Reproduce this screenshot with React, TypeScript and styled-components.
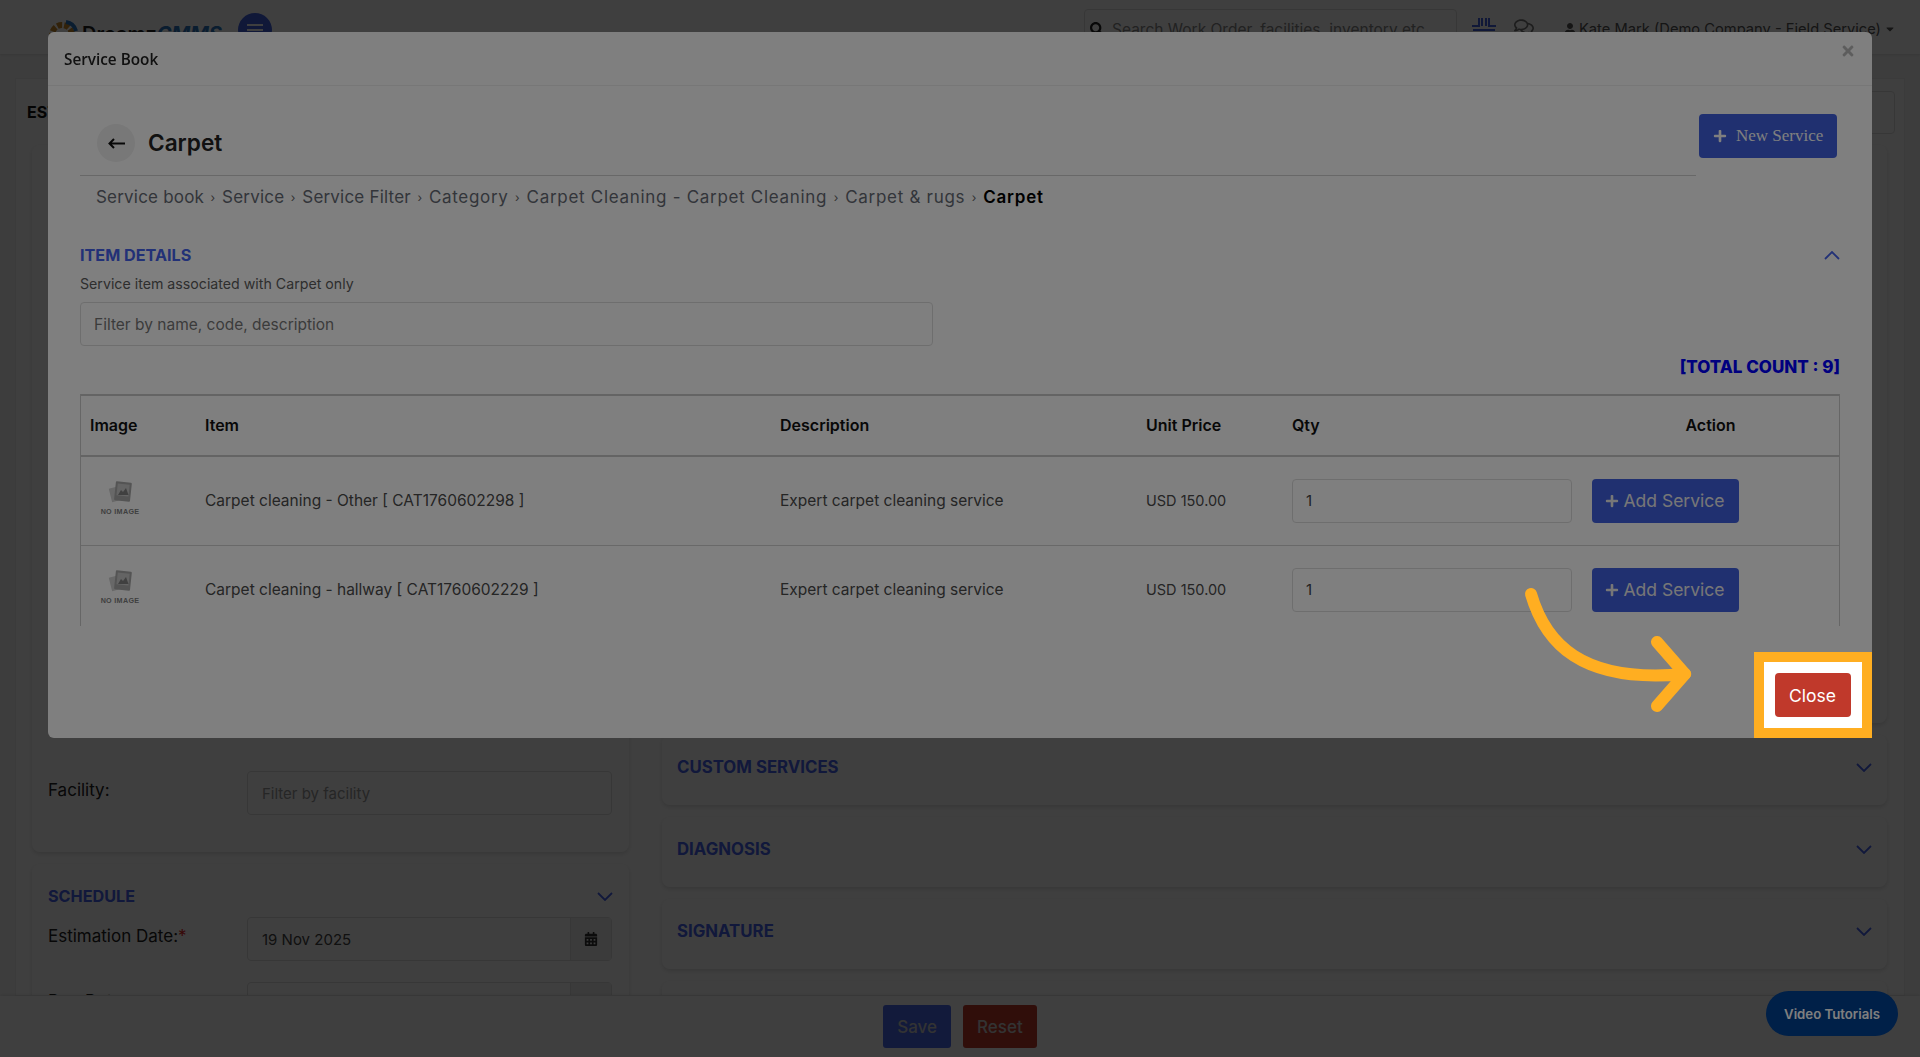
import { Fragment } from 'react';
import styled, { createGlobalStyle } from 'styled-components';
import { FaPlus, FaSearch, FaTimes, FaUser, FaRegComments, FaCalendarAlt, FaCaretDown } from 'react-icons/fa';

const BLUE = '#4060e0';
const HEADING = '#4562ee';

const GlobalStyle = createGlobalStyle`
  html, body {
    margin: 0;
    height: 100%;
    overflow: hidden;
  }
  body {
    font-family: Inter, 'Liberation Sans', sans-serif;
    color: #222;
    background: #f7f7f7;
  }
  * {
    box-sizing: border-box;
  }
`;

/* page behind the modal */
const Page = styled.div`
  height: 100vh;
  display: flex;
  flex-direction: column;
  overflow: hidden;
`;

const Navbar = styled.header`
  flex: 0 0 54px;
  display: flex;
  align-items: flex-start;
  padding: 9px 0 0 48px;
  background: #fff;
  box-shadow: 0 1px 3px rgba(0, 0, 0, 0.12);
`;

const Logo = styled.div`
  flex: 0 0 190px;
  display: flex;
  align-items: center;
  padding-top: 8px;
  font-size: 20px;
  font-weight: 600;
  color: #222;

  b {
    color: #2a74c0;
    font-style: italic;
    font-weight: 700;
  }
`;

const MenuButton = styled.div`
  flex: 0 0 34px;
  height: 34px;
  margin-top: 4px;
  border-radius: 50%;
  background: ${BLUE};
  display: flex;
  flex-direction: column;
  justify-content: center;
  align-items: center;
  gap: 3px;

  i {
    width: 16px;
    height: 2px;
    background: #fff;
  }
`;

const NavSearch = styled.div`
  flex: 0 0 373px;
  height: 40px;
  margin-left: 812px;
  padding: 0 5px 0 5px;
  display: flex;
  align-items: center;
  gap: 8px;
  border: 1px solid #ddd;
  border-radius: 4px;
  font-size: 15.5px;
  color: #888;
  white-space: nowrap;
`;

const NavIcons = styled.div`
  flex: none;
  display: flex;
  align-items: flex-start;
  gap: 17px;
  margin-left: 14px;
  padding-top: 8px;
  color: #777;
`;

const NavUser = styled.div`
  flex: none;
  display: flex;
  align-items: center;
  gap: 3px;
  margin-left: 30px;
  padding-top: 11px;
  font-size: 14.7px;
  color: #555;
  white-space: nowrap;
`;

const Main = styled.main`
  flex: 1;
  min-height: 0;
  margin: 24px 15px 0;
  padding: 0 11px;
  border: 1px solid #eee;
  background: #fff;
  overflow: hidden;
`;

const TitleRow = styled.div`
  height: 66px;
  display: flex;
  justify-content: space-between;
  align-items: center;
  font-size: 16px;
  font-weight: 700;
  color: #111;
`;

const OutlineBox = styled.div`
  width: 120px;
  height: 43px;
  margin-right: -2px;
  border: 1px solid #ddd;
  border-radius: 4px;
`;

const Columns = styled.div`
  display: grid;
  grid-template-columns: 597px 1225px;
  column-gap: 33px;
  margin-left: 5px;
`;

const Column = styled.div`
  display: flex;
  flex-direction: column;
  gap: 12px;
`;

const Card = styled.section<{ $h?: number }>`
  height: ${(p) => (p.$h ? `${p.$h}px` : 'auto')};
  padding: 20px 15px;
  background: #fff;
  border-radius: 8px;
  box-shadow: 0 2px 5px rgba(0, 0, 0, 0.14);
  overflow: hidden;
`;

const FacilityCard = styled(Card)`
  display: flex;
  flex-direction: column;
  justify-content: flex-end;
  padding: 20px 16px 16px;
`;

const ScheduleCard = styled(Card)`
  padding: 20px 16px;
`;

const AccordionHead = styled.div`
  display: flex;
  align-items: center;
  justify-content: space-between;
  height: 24px;
  font-size: 16.2px;
  font-weight: 700;
  color: ${HEADING};
`;

const ServiceHead = styled(AccordionHead)`
  font-size: 16.8px;
`;

const FieldRow = styled.div<{ $first?: boolean }>`
  display: grid;
  grid-template-columns: 199px 365px;
  align-items: start;
  font-size: 17px;
  margin-top: ${(p) => (p.$first ? '9px' : '0')};
  margin-bottom: 21px;

  label {
    padding-top: 9px;
  }
  em {
    color: #e02020;
    font-style: normal;
  }
`;

const BackField = styled.div`
  height: 44px;
  display: flex;
  align-items: center;
  justify-content: space-between;
  padding-left: 14px;
  border: 1px solid #ddd;
  border-radius: 4px;
  font-size: 15px;
  color: ${(p) => p.color || '#444'};
`;

const Addon = styled.div`
  width: 41px;
  height: 100%;
  display: flex;
  align-items: center;
  justify-content: center;
  background: #eee;
  border-left: 1px solid #ddd;
  color: #333;
`;

const BottomBar = styled.footer`
  flex: 0 0 61px;
  padding-top: 9px;
  display: flex;
  justify-content: center;
  gap: 12px;
  background: #fff;
  box-shadow: 0 -1px 3px rgba(0, 0, 0, 0.1);
`;

const BarButton = styled.button<{ $red?: boolean }>`
  height: 43px;
  padding: 0 14px;
  border: 0;
  border-radius: 3px;
  font: 500 17px Inter, sans-serif;
  color: #ccc;
  background: ${(p) => (p.$red ? '#c0392b' : '#4a68ec')};
`;

const VideoPill = styled.div`
  position: fixed;
  left: 1766px;
  top: 991px;
  width: 132px;
  height: 45px;
  z-index: 15;
  border-radius: 23px;
  display: flex;
  align-items: center;
  justify-content: center;
  background: #004090;
  color: #fff;
  font-size: 13.2px;
  font-weight: 600;
`;

/* layers */
const Backdrop = styled.div`
  position: fixed;
  inset: 0;
  z-index: 10;
  background: rgba(0, 0, 0, 0.5);
`;

const Dim = styled.div`
  position: fixed;
  inset: 0;
  z-index: 30;
  background: rgba(0, 0, 0, 0.5);
  backdrop-filter: blur(0.5px);
`;

/* modal */
const Modal = styled.div`
  position: fixed;
  left: 48px;
  top: 32px;
  width: 1824px;
  height: 706px;
  z-index: 20;
  display: flex;
  flex-direction: column;
  background: #fff;
  border-radius: 6px;
`;

const ModalHeader = styled.div`
  position: relative;
  flex: 0 0 54px;
  display: flex;
  align-items: center;
  padding: 0 16px;
  border-bottom: 1px solid #eee;
  font: 600 15.3px 'Open Sans', sans-serif;
  color: #222;
`;

const ModalClose = styled.span`
  position: absolute;
  top: 11px;
  right: 16px;
  display: flex;
  font-size: 16px;
  color: #bbb;
`;

const ModalBody = styled.div`
  padding: 28px 32px 0;
`;

const TopRow = styled.div`
  display: flex;
  align-items: flex-start;
  gap: 3px;
  padding-right: 3px;
`;

const TitleBlock = styled.div`
  flex: 1;
  height: 62px;
  padding: 10px 0 0 17px;
  display: flex;
  align-items: flex-start;
  gap: 13px;
  border-bottom: 1px solid #d0d0d0;
`;

const BackButton = styled.div`
  width: 38px;
  height: 38px;
  border-radius: 50%;
  display: flex;
  align-items: center;
  justify-content: center;
  background: #f0f0f0;
  color: #111;
`;

const PageTitle = styled.h1`
  margin: 0;
  font-size: 22.6px;
  line-height: 37px;
  font-weight: 600;
  color: #222;
`;

const NewServiceButton = styled.button`
  width: 138px;
  height: 44px;
  padding: 0 0 0 14px;
  display: flex;
  align-items: center;
  gap: 9px;
  border: 0;
  border-radius: 4px;
  background: ${BLUE};
  color: #fff;
  font: 400 17px 'Liberation Serif', serif;
`;

const Crumbs = styled.nav`
  display: flex;
  align-items: center;
  gap: 6.5px;
  height: 24px;
  margin: 9px 0 0 16px;
  font-size: 17px;
  color: #666b75;
`;

const Crumb = styled.span<{ $wide?: boolean }>`
  letter-spacing: ${(p) => (p.$wide ? '0.7px' : '0.2px')};
`;

const CrumbSep = styled.span`
  width: 5px;
  font-size: 12px;
  color: #666;
`;

const CurrentCrumb = styled.span`
  font-weight: 600;
  letter-spacing: 0.8px;
  color: #000;
`;

const SectionHead = styled(AccordionHead)`
  margin-top: 34px;
`;

const Hint = styled.div`
  margin-top: 6px;
  font-size: 14.2px;
  line-height: 22px;
  color: #5c5c5c;
`;

const FilterInput = styled.input`
  display: block;
  width: 853px;
  height: 44px;
  margin-top: 7px;
  padding: 0 13px;
  border: 1px solid #ddd;
  border-radius: 4px;
  font: 400 15.5px Inter, sans-serif;

  &::placeholder {
    color: #777;
  }
`;

const TotalCount = styled.div`
  margin-top: 9px;
  text-align: right;
  font-size: 17px;
  line-height: 24px;
  font-weight: 800;
  color: #0000ff;
`;

const TableWrap = styled.div`
  height: 232px;
  margin-top: 15px;
  border-left: 1px solid #ccc;
  border-right: 1px solid #ccc;
  overflow: hidden;
`;

const Table = styled.table`
  width: 100%;
  table-layout: fixed;
  border-collapse: collapse;
  font-size: 15.5px;
  color: #4a4a4a;

  th {
    height: 61px;
    padding: 0 9px 2px;
    text-align: left;
    font-size: 16px;
    font-weight: 600;
    color: #111;
    border-top: 2px solid #c8c8c8;
    border-bottom: 2px solid #c8c8c8;
  }
  td {
    height: 89px;
    padding: 0 9px;
    border-bottom: 1px solid #d2d2d2;
  }
`;

const ActionTh = styled.th`
  && {
    text-align: center;
  }
`;

const PriceCell = styled.td`
  font-size: 14.5px;
`;

const NoImage = styled.div`
  width: 40px;
  margin: -5px 0 0 10px;
  display: flex;
  flex-direction: column;
  align-items: center;
  gap: 4px;
  font: 700 7.2px 'Liberation Sans', sans-serif;
  letter-spacing: 0.3px;
  color: #808080;
  white-space: nowrap;
`;

const QtyInput = styled.input`
  display: block;
  width: 280px;
  height: 44px;
  padding: 0 13px;
  border: 1px solid #ddd;
  border-radius: 4px;
  font: 400 15px Inter, sans-serif;
  color: #444;
`;

const AddButton = styled.button`
  width: 147px;
  height: 44px;
  margin-left: 1px;
  padding: 0 2px 0 0;
  display: flex;
  align-items: center;
  justify-content: center;
  gap: 5px;
  border: 0;
  border-radius: 4px;
  background: ${BLUE};
  color: #eee;
  font: 400 17.5px Inter, sans-serif;
`;

/* tutorial highlight over the dimmed page */
const Highlight = styled.div`
  position: fixed;
  left: 1754px;
  top: 652px;
  width: 118px;
  height: 86px;
  z-index: 40;
  display: flex;
  align-items: center;
  justify-content: center;
  padding-right: 1px;
  background: #fff;
  border: 10px solid #ffae21;
`;

const CloseButton = styled.button`
  width: 76px;
  height: 44px;
  border: 0;
  border-radius: 4px;
  background: #c0392b;
  color: #fff;
  font: 400 17.5px Inter, sans-serif;
`;

const ArrowSvg = styled.svg`
  position: fixed;
  left: 1520px;
  top: 584px;
  z-index: 40;
`;

const Chevron = ({ up }: { up?: boolean }) => (
  <svg width="16" height="9" viewBox="0 0 16 9" fill="none" stroke="currentColor" strokeWidth="1.8">
    <path d={up ? 'M1 8 L8 1 L15 8' : 'M1 1 L8 8 L15 1'} />
  </svg>
);

const BackArrow = () => (
  <svg width="17" height="11" viewBox="0 0 17 11" fill="none" stroke="currentColor" strokeWidth="2">
    <path d="M17 5.500 H2 M6 1 L1.500 5.500 L6 10" />
  </svg>
);

const PhotoIcon = () => (
  <svg width="24" height="22" viewBox="0 0 24 22">
    <rect x="2" y="6" width="13" height="14" fill="#d0d0d0" transform="rotate(-14 8 12)" />
    <rect x="7" y="1" width="16" height="19" rx="1" fill="#a8a8a8" transform="rotate(6 15 10)" />
    <rect x="9" y="3" width="12" height="12" fill="#c8c8c8" transform="rotate(6 15 10)" />
    <path d="M10 14 L13 9 L15 11 L18 7 L20.500 14 Z" fill="#808080" />
  </svg>
);

const GearLogo = () => (
  <svg width="34" height="34" viewBox="0 0 34 34">
    <circle cx="14" cy="18" r="10" fill="none" stroke="#c98a2a" strokeWidth="6" strokeDasharray="5 2" />
    <path d="M18 5 A12 12 0 0 1 28 14" fill="none" stroke="#2a74c0" strokeWidth="4" />
  </svg>
);

const BoardIcon = () => (
  <svg width="26" height="24" viewBox="0 0 26 24" fill="none" stroke={BLUE} strokeWidth="2">
    <path d="M1 9 H8 V1 M18 1 V9 H25 M11 1 V9 M15 1 V9 M2 13 H24" />
  </svg>
);

const rows = [
  { name: 'Carpet cleaning - Other [ CAT1760602298 ]' },
  { name: 'Carpet cleaning - hallway [ CAT1760602229 ]' },
];

const crumbs = [
  { label: 'Service book' },
  { label: 'Service' },
  { label: 'Service Filter' },
  { label: 'Category', wide: true },
  { label: 'Carpet Cleaning - Carpet Cleaning', wide: true },
  { label: 'Carpet & rugs', wide: true },
];

const App = () => {
  return (
    <>
      <GlobalStyle />
      <Page>
        <Navbar>
          <Logo>
            <GearLogo />
            Dreamz<b>CMMS</b>
          </Logo>
          <MenuButton>
            <i />
            <i />
            <i />
          </MenuButton>
          <NavSearch>
            <FaSearch size={14} color="#222" />
            Search Work Order, facilities, inventory etc
          </NavSearch>
          <NavIcons>
            <BoardIcon />
            <FaRegComments size={20} />
          </NavIcons>
          <NavUser>
            <FaUser size={12} />
            Kate Mark (Demo Company - Field Service)
            <FaCaretDown size={12} />
          </NavUser>
        </Navbar>
        <Main>
          <TitleRow>
            ESTIMATION
            <OutlineBox />
          </TitleRow>
          <Columns>
            <Column>
              <FacilityCard $h={707}>
                <FieldRow>
                  <label>Facility:</label>
                  <BackField color="#999">Filter by facility</BackField>
                </FieldRow>
              </FacilityCard>
              <ScheduleCard>
                <AccordionHead>
                  SCHEDULE
                  <Chevron />
                </AccordionHead>
                <FieldRow $first>
                  <label>
                    Estimation Date:<em>*</em>
                  </label>
                  <BackField>
                    19 Nov 2025
                    <Addon>
                      <FaCalendarAlt size={14} />
                    </Addon>
                  </BackField>
                </FieldRow>
                <FieldRow>
                  <label>Due Date:</label>
                  <BackField>
                    <span />
                    <Addon>
                      <FaCalendarAlt size={14} />
                    </Addon>
                  </BackField>
                </FieldRow>
              </ScheduleCard>
            </Column>
            <Column>
              <Card $h={578} />
              {['CUSTOM SERVICES', 'DIAGNOSIS', 'SIGNATURE'].map((title) => (
                <Card key={title} $h={70}>
                  <ServiceHead>
                    {title}
                    <Chevron />
                  </ServiceHead>
                </Card>
              ))}
              <Card $h={70} />
            </Column>
          </Columns>
        </Main>
        <BottomBar>
          <BarButton>Save</BarButton>
          <BarButton $red>Reset</BarButton>
        </BottomBar>
        <VideoPill>Video Tutorials</VideoPill>
      </Page>

      <Backdrop />

      <Modal>
        <ModalHeader>
          Service Book
          <ModalClose>
            <FaTimes />
          </ModalClose>
        </ModalHeader>
        <ModalBody>
          <TopRow>
            <TitleBlock>
              <BackButton>
                <BackArrow />
              </BackButton>
              <PageTitle>Carpet</PageTitle>
            </TitleBlock>
            <NewServiceButton>
              <FaPlus size={14} />
              New Service
            </NewServiceButton>
          </TopRow>
          <Crumbs>
            {crumbs.map((c) => (
              <Fragment key={c.label}>
                <Crumb $wide={c.wide}>{c.label}</Crumb>
                <CrumbSep>›</CrumbSep>
              </Fragment>
            ))}
            <CurrentCrumb>Carpet</CurrentCrumb>
          </Crumbs>
          <SectionHead>
            ITEM DETAILS
            <Chevron up />
          </SectionHead>
          <Hint>Service item associated with Carpet only</Hint>
          <FilterInput placeholder="Filter by name, code, description" />
          <TotalCount>[TOTAL COUNT : 9]</TotalCount>
          <TableWrap>
            <Table>
              <colgroup>
                <col width="115" />
                <col width="575" />
                <col width="366" />
                <col width="146" />
                <col width="299" />
                <col />
              </colgroup>
              <thead>
                <tr>
                  <th>Image</th>
                  <th>Item</th>
                  <th>Description</th>
                  <th>Unit Price</th>
                  <th>Qty</th>
                  <ActionTh>Action</ActionTh>
                </tr>
              </thead>
              <tbody>
                {rows.map((r) => (
                  <tr key={r.name}>
                    <td>
                      <NoImage>
                        <PhotoIcon />
                        NO IMAGE
                      </NoImage>
                    </td>
                    <td>{r.name}</td>
                    <td>Expert carpet cleaning service</td>
                    <PriceCell>USD 150.00</PriceCell>
                    <td>
                      <QtyInput defaultValue="1" />
                    </td>
                    <td>
                      <AddButton>
                        <FaPlus size={14} />
                        Add Service
                      </AddButton>
                    </td>
                  </tr>
                ))}
              </tbody>
            </Table>
          </TableWrap>
        </ModalBody>
      </Modal>

      <Dim />

      <ArrowSvg width="180" height="130" viewBox="0 0 180 130" fill="none" stroke="#ffae21" strokeWidth="12" strokeLinecap="round" strokeLinejoin="round">
        <path d="M11 10 C25 58 60 100 165 90" />
        <path d="M137 58 L165 90 L137 122" />
      </ArrowSvg>

      <Highlight>
        <CloseButton>Close</CloseButton>
      </Highlight>
    </>
  );
};

export default App;
